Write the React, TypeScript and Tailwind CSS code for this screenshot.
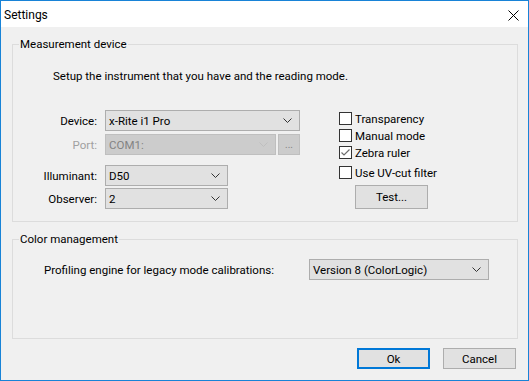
import * as React from "react";

const Chevron = ({ disabled }: { disabled?: boolean }) => (
  <svg width="9" height="5" viewBox="0 0 9 5" className="shrink-0">
    <path
      d="M0.5 0.5 L4.5 4.5 L8.5 0.5"
      fill="none"
      stroke={disabled ? "#bfbfbf" : "#333333"}
      strokeWidth="1"
    />
  </svg>
);

type SelectProps = {
  value: string;
  className: string;
  disabled?: boolean;
};

const Select = ({ value, className, disabled }: SelectProps) => (
  <div
    className={
      "h-[21px] flex items-center justify-between border pl-[3px] pr-[7px] " +
      (disabled
        ? "bg-[#cccccc] border-[#bfbfbf] text-[#838383] "
        : "bg-[#e1e1e1] border-[#adadad] text-black ") +
      className
    }
  >
    <span className="leading-[16px]">{value}</span>
    <Chevron disabled={disabled} />
  </div>
);

const Row = ({
  label,
  disabled,
  className = "",
  children,
}: {
  label: string;
  disabled?: boolean;
  className?: string;
  children: React.ReactNode;
}) => (
  <div className={"flex items-center " + className}>
    <span
      className={
        "w-[84px] text-right mr-[8px] leading-[16px] " +
        (disabled ? "text-[#a0a0a0]" : "text-black")
      }
    >
      {label}
    </span>
    {children}
  </div>
);

const CheckBox = ({ label, checked }: { label: string; checked?: boolean }) => (
  <div className="h-[17px] flex items-center">
    <div className="w-[13px] h-[13px] border border-[#333333] bg-white flex items-center justify-center">
      {checked && (
        <svg width="11" height="11" viewBox="0 0 11 11">
          <path d="M1.5 5.5 L4 8 L9.5 2.5" fill="none" stroke="#6d6d6d" strokeWidth="1.2" />
        </svg>
      )}
    </div>
    <span className="ml-[3px] leading-[16px]">{label}</span>
  </div>
);

const Button = ({
  label,
  primary,
  className = "",
}: {
  label: string;
  primary?: boolean;
  className?: string;
}) => (
  <button
    className={
      "bg-[#e1e1e1] flex items-center justify-center leading-[16px] " +
      (primary ? "border-2 border-[#0078d7] " : "border border-[#adadad] ") +
      className
    }
  >
    {label}
  </button>
);

export default function App() {
  return (
    <div className="w-[529px] h-[381px] border border-[#1883d7] bg-[#f0f0f0] flex flex-col font-['Roboto','Segoe_UI',sans-serif] text-[11.5px] text-black">
      {/* title bar */}
      <div className="h-[26px] bg-white flex items-center justify-between pl-[3px] pr-[9px] shrink-0">
        <span className="text-[12px] leading-[16px] mt-[1px]">Settings</span>
        <svg width="11" height="11" viewBox="0 0 11 11" className="mt-[2px]">
          <path d="M0.5 0.5 L10.5 10.5 M10.5 0.5 L0.5 10.5" stroke="#000" strokeWidth="1" />
        </svg>
      </div>

      <div className="flex flex-col px-[11px]">
        <fieldset className="w-[506px] h-[186px] mt-[9px] border border-[#dcdcdc] p-0">
          <legend className="ml-[6px] px-[1px] leading-[16px]">Measurement device</legend>
          <p className="pl-[40px] mt-[16px] leading-[16px]">
            Setup the instrument that you have and the reading mode.
          </p>
          <div className="flex mt-[26px]">
            <div className="flex flex-col w-[287px]">
              <Row label="Device:">
                <Select value="x-Rite i1 Pro" className="w-[195px]" />
              </Row>
              <Row label="Port:" disabled className="mt-[3px]">
                <Select value="COM1:" disabled className="w-[171px]" />
                <div className="ml-[2px] w-[22px] h-[21px] border border-[#bfbfbf] bg-[#cccccc] flex items-end justify-center pb-[4px] text-[#838383] leading-none text-[10px]">
                  ...
                </div>
              </Row>
              <Row label="Illuminant:" className="mt-[10px]">
                <Select value="D50" className="w-[123px]" />
              </Row>
              <Row label="Observer:" className="mt-[2px]">
                <Select value="2" className="w-[123px]" />
              </Row>
            </div>
            <div className="ml-[39px] flex flex-col">
              <CheckBox label="Transparency" />
              <CheckBox label="Manual mode" />
              <CheckBox label="Zebra ruler" checked />
              <div className="mt-[3px]">
                <CheckBox label="Use UV-cut filter" />
              </div>
              <Button label="Test..." className="ml-[16px] mt-[4px] w-[73px] h-[24px]" />
            </div>
          </div>
        </fieldset>

        <fieldset className="w-[506px] h-[108px] mt-[9px] border border-[#dcdcdc] p-0">
          <legend className="ml-[6px] px-[1px] leading-[16px]">Color management</legend>
          <div className="flex items-center mt-[12px] pl-[31px]">
            <span className="w-[265px] leading-[16px]">
              Profiling engine for legacy mode calibrations:
            </span>
            <Select value="Version 8 (ColorLogic)" className="w-[180px]" />
          </div>
        </fieldset>

        <div className="flex justify-end gap-[13px] mt-[9px] pr-[1px]">
          <Button label="Ok" primary className="w-[73px] h-[21px]" />
          <Button label="Cancel" className="w-[73px] h-[21px]" />
        </div>
      </div>
    </div>
  );
}
